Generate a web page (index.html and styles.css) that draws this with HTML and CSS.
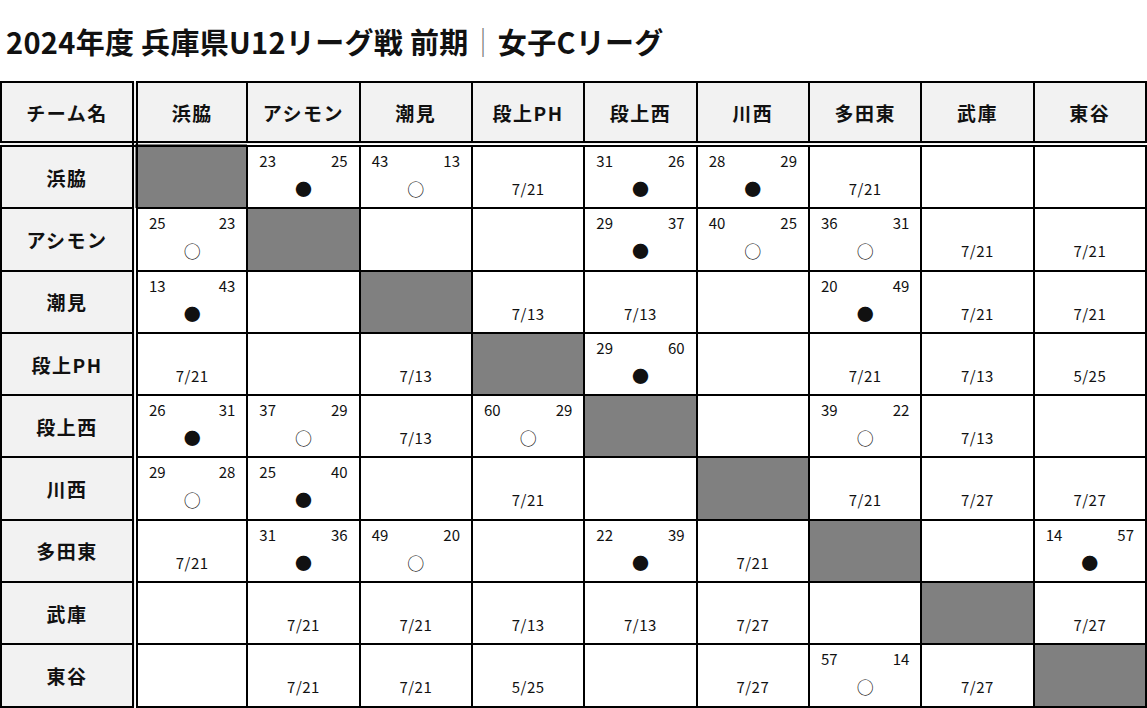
FILE: index.html
```html
<!DOCTYPE html>
<html lang="ja">
<head>
<meta charset="utf-8">
<title>2024年度 兵庫県U12リーグ戦 前期｜女子Cリーグ</title>
<link rel="stylesheet" href="styles.css">
</head>
<body>
<h1 class="title">2024年度 兵庫県U12リーグ戦 前期<span class="sep">｜</span>女子Cリーグ</h1>
<table class="league">
  <colgroup>
    <col class="c-name">
    <col span="9">
  </colgroup>
  <thead>
    <tr>
      <th class="corner">チーム名</th>
      <th>浜脇</th><th>アシモン</th><th>潮見</th><th>段上PH</th><th>段上西</th><th>川西</th><th>多田東</th><th>武庫</th><th>東谷</th>
    </tr>
  </thead>
  <tbody id="body"></tbody>
</table>
<script src="app.js"></script>
</body>
</html>
```

FILE: app.js
```js
const teams = ["浜脇","アシモン","潮見","段上PH","段上西","川西","多田東","武庫","東谷"];
// each cell: "X" self, "" empty, "d:7/21" date, "a b W|L" score
const rows = [
  ["X","23 25 L","43 13 W","d:7/21","31 26 L","28 29 L","d:7/21","",""],
  ["25 23 W","X","","","29 37 L","40 25 W","36 31 W","d:7/21","d:7/21"],
  ["13 43 L","","X","d:7/13","d:7/13","","20 49 L","d:7/21","d:7/21"],
  ["d:7/21","","d:7/13","X","29 60 L","","d:7/21","d:7/13","d:5/25"],
  ["26 31 L","37 29 W","d:7/13","60 29 W","X","","39 22 W","d:7/13",""],
  ["29 28 W","25 40 L","","d:7/21","","X","d:7/21","d:7/27","d:7/27"],
  ["d:7/21","31 36 L","49 20 W","","22 39 L","d:7/21","X","","14 57 L"],
  ["","d:7/21","d:7/21","d:7/13","d:7/13","d:7/27","","X","d:7/27"],
  ["","d:7/21","d:7/21","d:5/25","","d:7/27","57 14 W","d:7/27","X"]
];
const tb = document.getElementById("body");
rows.forEach((r, i) => {
  const tr = document.createElement("tr");
  const th = document.createElement("th");
  th.className = "team";
  th.textContent = teams[i];
  tr.appendChild(th);
  r.forEach(v => {
    const td = document.createElement("td");
    if (v === "X") {
      td.className = "self";
    } else {
      let top = "", bottom = "", kind = "";
      if (v.startsWith("d:")) {
        bottom = v.slice(2); kind = "date";
      } else if (v) {
        const p = v.split(" ");
        top = `<span>${p[0]}</span><span>${p[1]}</span>`;
        bottom = p[2] === "W" ? "○" : "●";
        kind = "mark";
      }
      td.innerHTML = `<div class="score">${top}</div><div class="res ${kind}">${bottom}</div>`;
    }
    tr.appendChild(td);
  });
  tb.appendChild(tr);
});
```

FILE: styles.css
```css
html, body {
  margin: 0;
  padding: 0;
  background: #fff;
}
body {
  font-family: "Noto Sans CJK JP", "Noto Sans", sans-serif;
  color: #111;
}
.title {
  margin: 0;
  padding: 21px 0 0 6px;
  height: 59px;
  box-sizing: border-box;
  font-size: 29px;
  font-weight: 700;
  line-height: 40px;
  letter-spacing: 0.3px;
}
.sep {
  font-weight: 300;
  color: #777;
}
.league {
  border-collapse: collapse;
  table-layout: fixed;
  width: 1147px;
  margin-top: 22px;
}
.c-name {
  width: 134px;
}
.league th,
.league td {
  border: 2px solid #000;
  padding: 0;
}
.league thead th {
  background: #f2f2f2;
  height: 58px;
  font-size: 19px;
  font-weight: 700;
  text-align: center;
  vertical-align: middle;
  border-bottom: 6px double #000;
  letter-spacing: 1.5px;
}
.league th.corner,
.league th.team {
  border-right: 6px double #000;
}
.league th.team {
  background: #f2f2f2;
  height: 60.3px;
  font-size: 19px;
  font-weight: 700;
  letter-spacing: 1.5px;
}
.league td {
  height: 60.3px;
  vertical-align: top;
  background: #fff;
}
.league td.self {
  background: #808080;
}
.score {
  display: flex;
  justify-content: space-between;
  padding: 4px 11px 0 11px;
  height: 20px;
  font-size: 15px;
  line-height: 20px;
}
.res {
  text-align: center;
  height: 24px;
  line-height: 24px;
  margin-top: 6px;
}
.res.mark {
  font-size: 17px;
}
.res.date {
  font-size: 15px;
  letter-spacing: 0.5px;
}
```
